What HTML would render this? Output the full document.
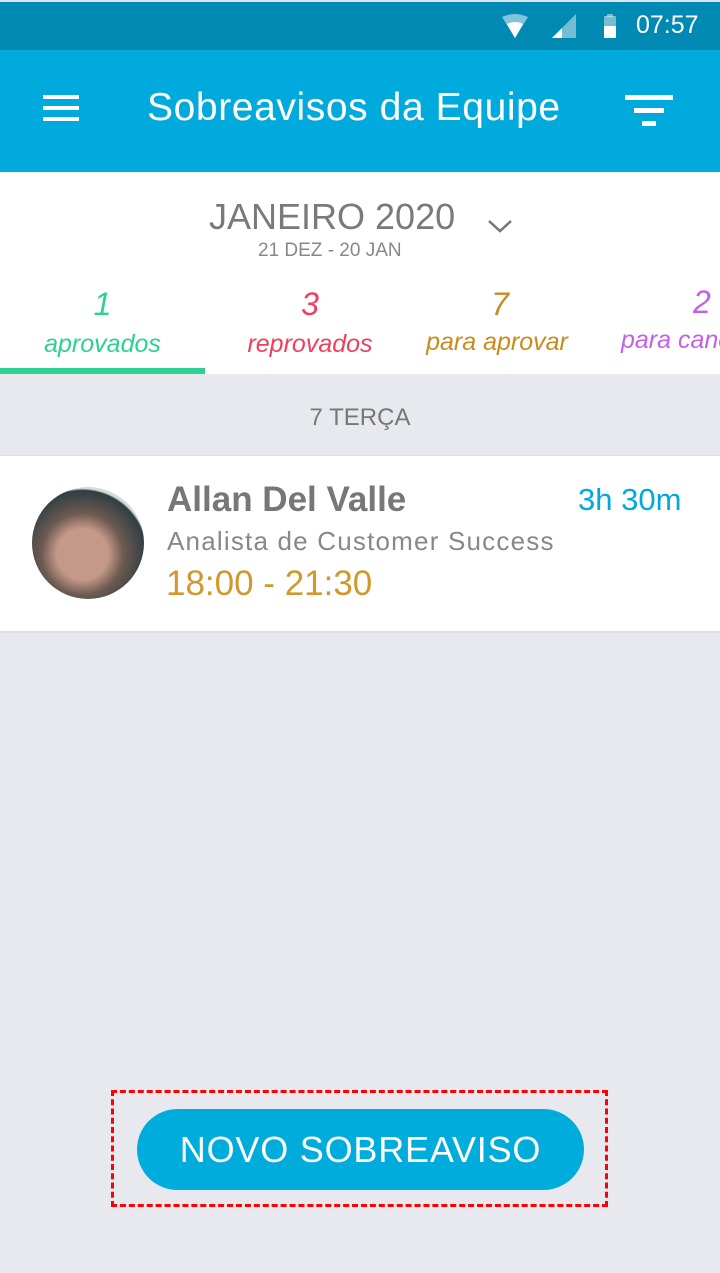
<!DOCTYPE html>
<html><head><meta charset="utf-8"><style>
*{margin:0;padding:0;box-sizing:border-box}
html,body{width:720px;height:1273px;overflow:hidden}
body{background:#e8e9ef;font-family:"Liberation Sans",sans-serif;position:relative}
.abs{position:absolute}
</style></head><body>
<div class="abs" style="left:0;top:0;width:720px;height:2px;background:#dfe6ea"></div>
<div class="abs" style="left:0;top:2px;width:720px;height:48px;background:#0089b3"></div>
<svg class="abs" style="left:500px;top:14px" width="120" height="26">
<path d="M2 3 Q15 -3 28 3 L15 24 Z" fill="#fff" opacity="0.5"/>
<path d="M7 10 Q15 6 23 10 L15 24 Z" fill="#fff"/>
<path d="M52 24 L76 24 L76 0 Z" fill="#fff" opacity="0.45"/>
<path d="M52 24 L62 24 L62 14 Z" fill="#fff"/>
<rect x="104" y="2" width="12" height="22" fill="#fff" opacity="0.45"/>
<rect x="107" y="0" width="6" height="3" fill="#fff" opacity="0.45"/>
<rect x="104" y="12" width="12" height="12" fill="#fff"/>
</svg>
<div class="abs" style="left:636px;top:11px;color:#fff;font-size:25px">07:57</div>
<div class="abs" style="left:0;top:50px;width:720px;height:122px;background:#00aadc"></div>
<div class="abs" style="left:43px;top:95px;width:36px;height:4px;background:#fff"></div>
<div class="abs" style="left:43px;top:106px;width:36px;height:4px;background:#fff"></div>
<div class="abs" style="left:43px;top:117px;width:36px;height:4px;background:#fff"></div>
<div class="abs" style="left:147px;top:86px;color:#fff;font-size:39px;letter-spacing:0.6px;white-space:nowrap">Sobreavisos da Equipe</div>
<div class="abs" style="left:625px;top:95px;width:48px;height:5px;background:#fff"></div>
<div class="abs" style="left:634px;top:108px;width:30px;height:5px;background:#fff"></div>
<div class="abs" style="left:642px;top:121px;width:14px;height:5px;background:#fff"></div>
<div class="abs" style="left:0;top:172px;width:720px;height:202px;background:#fff;overflow:hidden">
<div class="abs" style="left:209px;top:24px;color:#7a7a7a;font-size:36px">JANEIRO 2020</div>
<svg class="abs" style="left:487px;top:46px" width="26" height="16"><path d="M2 3 L13 13 L24 3" stroke="#777" stroke-width="2.5" fill="none"/></svg>
<div class="abs" style="left:258px;top:68px;color:#888;font-size:19px">21 DEZ - 20 JAN</div>
<div class="abs" style="left:0;top:114px;width:205px;text-align:center;color:#2ed193;font-size:32px;font-style:italic">1</div>
<div class="abs" style="left:0;top:158px;width:205px;text-align:center;color:#2ed193;font-size:25px;font-style:italic">aprovados</div>
<div class="abs" style="left:0;top:196px;width:205px;height:6px;background:#2ed193"></div>
<div class="abs" style="left:210px;top:114px;width:200px;text-align:center;color:#f23e5e;font-size:32px;font-style:italic">3</div>
<div class="abs" style="left:210px;top:158px;width:200px;text-align:center;color:#f23e5e;font-size:25px;font-style:italic">reprovados</div>
<div class="abs" style="left:400px;top:114px;width:200px;text-align:center;color:#c98c1c;font-size:32px;font-style:italic">7</div>
<div class="abs" style="left:397px;top:156px;width:200px;text-align:center;color:#c98c1c;font-size:25px;font-style:italic">para aprovar</div>
<div class="abs" style="left:693px;top:112px;color:#c460e8;font-size:32px;font-style:italic">2</div>
<div class="abs" style="left:621px;top:154px;color:#c460e8;font-size:25px;font-style:italic;white-space:nowrap">para cancelar</div>
</div>
<div class="abs" style="left:0;top:404px;width:720px;text-align:center;color:#777;font-size:24px">7 TERÇA</div>
<div class="abs" style="left:0;top:455px;width:720px;height:178px;background:#fff;border-top:1px solid #ddd;border-bottom:2px solid #ddd"></div>
<div class="abs" style="left:32px;top:487px;width:112px;height:112px;border-radius:50%;background:radial-gradient(circle at 45% 60%,#c4998a 0 28%,#6d5a50 45%,#2f3e44 70%,#d8dcd6 72%)"></div>
<div class="abs" style="left:167px;top:480px;color:#777;font-size:35px;font-weight:bold">Allan Del Valle</div>
<div class="abs" style="left:578px;top:482px;color:#00a9dc;font-size:31px">3h 30m</div>
<div class="abs" style="left:167px;top:526px;color:#888;font-size:26px;letter-spacing:1.2px">Analista de Customer Success</div>
<div class="abs" style="left:166px;top:564px;color:#d3972e;font-size:35px">18:00 - 21:30</div>
<div class="abs" style="left:111px;top:1090px;width:497px;height:117px;border:3px dashed #f00"></div>
<div class="abs" style="left:137px;top:1109px;width:447px;height:81px;border-radius:41px;background:#00acdc;color:#fff;font-size:36px;letter-spacing:0.8px;text-align:center;line-height:81px">NOVO SOBREAVISO</div>
</body></html>
